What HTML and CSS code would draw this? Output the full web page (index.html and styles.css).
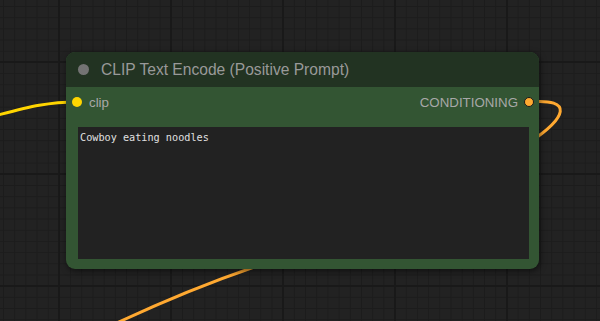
FILE: index.html
```html
<!DOCTYPE html>
<html>
<head>
  <title>CLIP Text Encode</title>
  <meta name="viewport" content="width=device-width, initial-scale=1.0">
  <link rel="stylesheet" href="styles.css">
</head>
<body>
  <div class="canvas">
    <!-- links are drawn under the nodes -->
    <svg class="links" width="600" height="321" viewBox="0 0 600 321">
      <path class="link clip-link" d="M -30 122 C 20 110, 40 102, 77 102" />
      <path class="link cond-link" d="M 529 102 C 575 98, 566 118, 530 142" />
      <path class="link cond-link" d="M 300 252 Q 200 282.5, 100 331" />
    </svg>

    <div class="node">
      <div class="node-title">
        <span class="title-dot"></span>
        <span class="title-text">CLIP Text Encode (Positive Prompt)</span>
      </div>
      <div class="node-body">
        <div class="slots">
          <div class="slot slot-in">
            <span class="slot-dot clip"></span>
            <span>clip</span>
          </div>
          <div class="slot slot-out">
            <span>CONDITIONING</span>
            <span class="slot-dot conditioning"></span>
          </div>
        </div>
        <textarea class="prompt" spellcheck="false">Cowboy eating noodles</textarea>
      </div>
    </div>
  </div>
</body>
</html>
```

FILE: styles.css
```css
html, body {
  margin: 0;
  padding: 0;
}

body {
  font-family: 'Liberation Sans', Arial, sans-serif;
  background-color: #222;
  overflow: hidden;
}

.canvas {
  position: relative;
  width: 600px;
  height: 321px;
  background-color: #222;
  background-image:
    linear-gradient(to right, #191919 2px, transparent 2px),
    linear-gradient(to bottom, #191919 2px, transparent 2px),
    linear-gradient(to right, #1c1c1c 1px, transparent 1px),
    linear-gradient(to bottom, #1c1c1c 1px, transparent 1px);
  background-size: 112px 112px, 112px 112px, 11.2px 11.2px, 11.2px 11.2px;
  background-position: 58px 0, 0 61px, 3px 0, 0 6px;
}

.links {
  position: absolute;
  left: 0;
  top: 0;
}

.link {
  fill: none;
  stroke-width: 3;
}

.clip-link {
  stroke: #ffd500;
}

.cond-link {
  stroke: #ffa931;
}

.node {
  position: absolute;
  left: 66px;
  top: 52px;
  width: 473px;
  height: 217px;
  display: flex;
  flex-direction: column;
  border-radius: 9px;
  background-color: #335533;
  box-shadow: 1px 2px 6px rgba(0, 0, 0, 0.55);
  overflow: hidden;
}

.node-title {
  height: 35px;
  flex-shrink: 0;
  display: flex;
  align-items: center;
  background-color: #223322;
  color: #999;
  font-size: 15.6px;
}

.title-dot {
  width: 11px;
  height: 11px;
  border-radius: 50%;
  background-color: #737373;
  margin-left: 12px;
  margin-right: 12px;
}

.node-body {
  flex: 1;
  display: flex;
  flex-direction: column;
  padding: 0 10px 10px 12px;
}

.slots {
  height: 40px;
  display: flex;
  justify-content: space-between;
  align-items: flex-start;
  padding-top: 9px;
  box-sizing: border-box;
}

.slot {
  display: flex;
  align-items: center;
  height: 12px;
  color: #a8a8a8;
  font-size: 13.3px;
}

.slot-in {
  margin-left: -6px;
  gap: 7px;
}

.slot-out {
  margin-right: -5px;
  gap: 6px;
}

.slot-dot {
  width: 10px;
  height: 10px;
  border-radius: 50%;
  box-sizing: border-box;
}

.slot-dot.clip {
  background-color: #ffd500;
}

.slot-dot.conditioning {
  background-color: #ffa931;
  border: 1px solid #1a1a1a;
}

.prompt {
  flex: 1;
  margin: 0;
  padding: 3px 2px;
  border: none;
  outline: none;
  resize: none;
  background-color: #222;
  color: #e0e0e0;
  font-family: 'DejaVu Sans Mono', 'Liberation Mono', monospace;
  font-size: 10.2px;
  line-height: 15px;
}
```
